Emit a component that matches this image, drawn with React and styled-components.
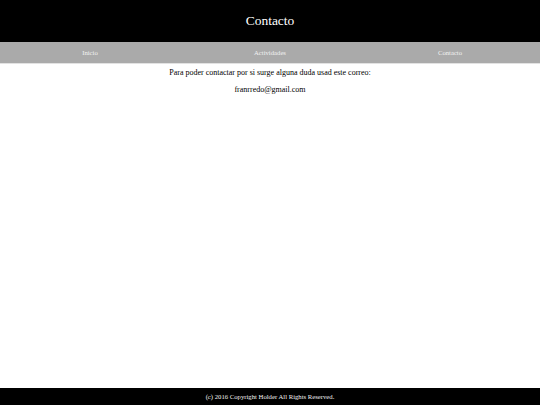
import React from "react";
import styled, { createGlobalStyle } from "styled-components";

const GlobalStyle = createGlobalStyle`
  html, body {
    margin: 0;
    padding: 0;
    background: #fff;
  }
  body {
    font-family: "Liberation Serif", "Times New Roman", serif;
  }
`;

const links = ["Inicio", "Actividades", "Contacto"];

const App = () => {
  return (
    <Page>
      <GlobalStyle />
      <Header>
        <Title>Contacto</Title>
      </Header>
      <Nav>
        {links.map((l) => (
          <NavLink href="#" key={l}>
            {l}
          </NavLink>
        ))}
      </Nav>
      <Main>
        <Para>Para poder contactar por si surge alguna duda usad este correo:</Para>
        <Para>franrredo@gmail.com</Para>
      </Main>
      <Footer>(c) 2016 Copyright Holder All Rights Reserved.</Footer>
    </Page>
  );
};

const Page = styled.div`
  min-height: 405px;
  display: flex;
  flex-direction: column;
`;

const Header = styled.header`
  height: 42px;
  background: #000;
  display: flex;
  align-items: center;
  justify-content: center;
`;

const Title = styled.h1`
  margin: 0;
  font-weight: normal;
  font-size: 13.5px;
  line-height: 1.15;
  color: #fff;
`;

const Nav = styled.nav`
  height: 21px;
  background: #aaaaaa;
  border-bottom: 1px solid #e2e2e2;
  display: grid;
  grid-template-columns: repeat(3, 1fr);
  align-items: center;
`;

const NavLink = styled.a`
  text-align: center;
  font-size: 6.7px;
  color: #f2f2f2;
  text-decoration: none;
`;

const Main = styled.main`
  flex: 1;
  padding-top: 4px;
  display: flex;
  flex-direction: column;
  align-items: center;
  gap: 8px;
`;

const Para = styled.p`
  margin: 0;
  font-size: 8px;
  line-height: 9px;
  color: #000;
`;

const Footer = styled.footer`
  height: 17px;
  background: #000;
  color: #f0f0f0;
  font-size: 6.7px;
  display: flex;
  align-items: center;
  justify-content: center;
`;

export default App;
